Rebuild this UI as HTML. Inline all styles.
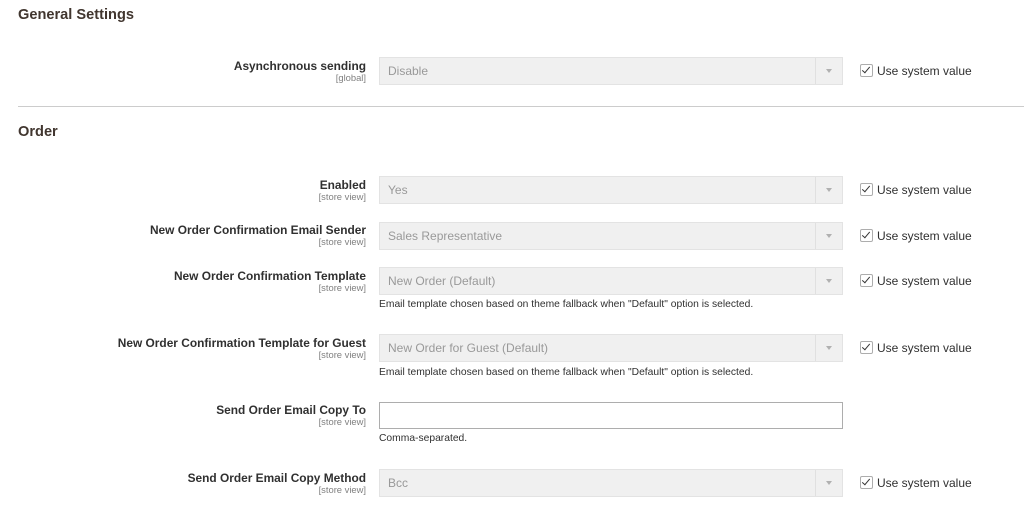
<html><head><style>
body{margin:0;background:#fff;font-family:"Liberation Sans",sans-serif;color:#303030;width:1024px;height:510px;overflow:hidden;position:relative}
.h{position:absolute;left:18px;font-weight:bold;font-size:14.6px;color:#41362f}
.lab{position:absolute;right:658px;text-align:right;font-weight:bold;font-size:11.9px;color:#303030;line-height:14px}
.lab small{display:block;font-weight:normal;font-size:9.4px;color:#808080;line-height:10px}
.sel{position:absolute;left:379px;width:462px;height:26px;border:1px solid #e3e3e3;background:#f0f0f0;box-sizing:content-box;font-size:12px;color:#999;line-height:26px}
.sel span{padding-left:8px}
.sel i{position:absolute;right:0;top:0;width:26px;height:26px;border-left:1px solid #e0e0e0}
.sel i:after{content:"";position:absolute;left:10px;top:11px;border:3px solid transparent;border-top:4px solid #b0b0b0}
.inp{position:absolute;left:379px;width:462px;height:25px;border:1px solid #adadad;background:#fff}
.cb{position:absolute;left:860px;font-size:12px;color:#303030;line-height:14px}
.cb b{display:inline-block;width:11px;height:11px;border:1px solid #adadad;border-radius:2px;vertical-align:-2px;margin-right:4px;position:relative;background:#fff}
.cb b:after{content:"";position:absolute;left:3px;top:0px;width:3px;height:7px;border:solid #333;border-width:0 1.5px 1.5px 0;transform:rotate(40deg)}
.note{position:absolute;left:379px;font-size:10.3px;color:#303030}
</style></head><body>
<div class="h" style="top:7px">General Settings</div>
<div class="lab" style="top:59px">Asynchronous sending<small>[global]</small></div>
<div class="sel" style="top:57px"><span>Disable</span><i></i></div>
<div class="cb" style="top:64px"><b></b>Use system value</div>
<div style="position:absolute;left:18px;right:0;top:106px;border-top:1px solid #ccc"></div>
<div class="h" style="top:124px">Order</div>

<div class="lab" style="top:178px">Enabled<small>[store view]</small></div>
<div class="sel" style="top:176px"><span>Yes</span><i></i></div>
<div class="cb" style="top:183px"><b></b>Use system value</div>

<div class="lab" style="top:223px">New Order Confirmation Email Sender<small>[store view]</small></div>
<div class="sel" style="top:222px"><span>Sales Representative</span><i></i></div>
<div class="cb" style="top:229px"><b></b>Use system value</div>

<div class="lab" style="top:269px">New Order Confirmation Template<small>[store view]</small></div>
<div class="sel" style="top:267px"><span>New Order (Default)</span><i></i></div>
<div class="cb" style="top:274px"><b></b>Use system value</div>
<div class="note" style="top:299px">Email template chosen based on theme fallback when "Default" option is selected.</div>

<div class="lab" style="top:336px">New Order Confirmation Template for Guest<small>[store view]</small></div>
<div class="sel" style="top:334px"><span>New Order for Guest (Default)</span><i></i></div>
<div class="cb" style="top:341px"><b></b>Use system value</div>
<div class="note" style="top:367px">Email template chosen based on theme fallback when "Default" option is selected.</div>

<div class="lab" style="top:403px">Send Order Email Copy To<small>[store view]</small></div>
<div class="inp" style="top:402px"></div>
<div class="note" style="top:433px">Comma-separated.</div>

<div class="lab" style="top:471px">Send Order Email Copy Method<small>[store view]</small></div>
<div class="sel" style="top:469px"><span>Bcc</span><i></i></div>
<div class="cb" style="top:476px"><b></b>Use system value</div>
</body></html>
